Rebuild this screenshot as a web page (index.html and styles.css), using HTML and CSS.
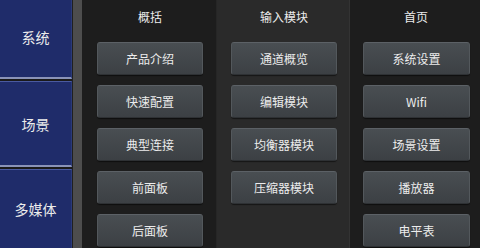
FILE: index.html
```html
<!DOCTYPE html>
<html>
<head>
<meta charset="utf-8">
<link rel="stylesheet" href="styles.css">
</head>
<body>
<div class="app">
  <nav class="side">
    <div class="side-btn s1">系统</div>
    <div class="side-btn s2">场景</div>
    <div class="side-btn s3">多媒体</div>
  </nav>
  <div class="gutter"></div>
  <section class="col c1">
    <div class="head">概括</div>
    <div class="btn">产品介绍</div>
    <div class="btn">快速配置</div>
    <div class="btn">典型连接</div>
    <div class="btn">前面板</div>
    <div class="btn">后面板</div>
  </section>
  <section class="col c2">
    <div class="head">输入模块</div>
    <div class="btn">通道概览</div>
    <div class="btn">编辑模块</div>
    <div class="btn">均衡器模块</div>
    <div class="btn">压缩器模块</div>
  </section>
  <section class="col c3">
    <div class="head">首页</div>
    <div class="btn">系统设置</div>
    <div class="btn">Wifi</div>
    <div class="btn">场景设置</div>
    <div class="btn">播放器</div>
    <div class="btn">电平表</div>
  </section>
</div>
</body>
</html>
```
FILE: styles.css
```css
* { box-sizing: border-box; }
html, body { margin: 0; padding: 0; background: #1d1d1d; }
body {
  width: 480px; height: 248px; overflow: hidden;
  font-family: "Noto Sans CJK SC", "Noto Sans", sans-serif;
  color: #ececec;
}
.app { display: flex; height: 248px; }
.side {
  width: 73px;
  display: flex; flex-direction: column;
  background: #1a1a1a;
  border-right: 1px solid #202020;
}
.side-btn {
  background: #1f2c6a;
  display: flex; align-items: center; justify-content: center;
  font-size: 14px;
  border-right: 1px solid #2a3a7a;
  flex-shrink: 0;
}
.s1 { height: 79px; padding-bottom: 3px; border-bottom: 2px solid #8a93b8; }
.s2 { height: 86px; margin-top: 2px; border-top: 1px solid #4a5aa0; border-bottom: 2px solid #8a93b8; }
.s3 { flex: 1; margin-top: 2px; border-top: 1px solid #4a5aa0; }
.gutter { width: 9px; background: #4d4d4d; }
.col {
  display: flex; flex-direction: column;
  padding-top: 8px;
}
.c1 { width: 135px; padding-left: 15px; background: #1d1d1d; border-right: 1px solid #262626; }
.c2 { width: 133px; padding-left: 14px; background: #2a2a2a; border-right: 1px solid #333; }
.c3 { flex: 1; padding-left: 13px; background: #1d1d1d; }
.head {
  width: 106px; height: 18px; flex-shrink: 0;
  font-size: 12px; line-height: 18px; text-align: center;
  margin-bottom: 16px;
}
.btn {
  width: 106px; height: 33px; flex-shrink: 0;
  margin-bottom: 10px;
  display: flex; align-items: center; justify-content: center;
  font-size: 12px;
  background: linear-gradient(#494e52, #3c4044);
  border: 1px solid #53585c;
  border-top-color: #5c6166;
  border-bottom-color: #2e3134;
  border-radius: 3px;
  box-shadow: 0 1px 1px rgba(0,0,0,0.5);
}
.c3 .btn { width: 107px; }
```
